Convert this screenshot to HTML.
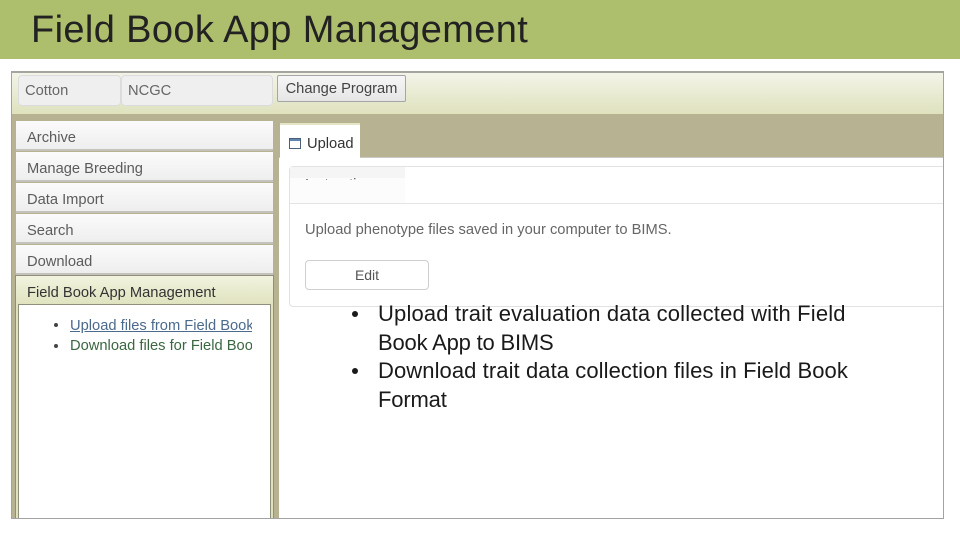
<!DOCTYPE html>
<html><head><meta charset="utf-8">
<style>
html,body{margin:0;padding:0;width:960px;height:540px;overflow:hidden;background:#fff}
body{position:relative;font-family:"Liberation Sans",Arial,sans-serif}
.a{position:absolute;box-sizing:border-box;white-space:nowrap}
.nav{left:16px;width:257px;height:30px;background:linear-gradient(#fbfbfb,#eeeeee);border-bottom:2px solid #c3c3bb;color:#5c5c5c;font-size:14.7px;line-height:34px;padding-left:11px}
.body{font-size:22px;color:#1a1a1a;letter-spacing:.16px;line-height:28px}
</style></head><body>
<div class="a" style="left:0;top:0;width:960px;height:59px;background:#adbf6c"></div>
<div class="a" style="left:31px;top:6px;font-size:38px;line-height:48px;color:#222;letter-spacing:.37px">Field Book App Management</div>

<div class="a" style="left:11px;top:71px;width:933px;height:448px;background:#fff;border:1px solid #a3a3a3;border-top:2px solid #a5a5a0"></div>
<div class="a" style="left:12px;top:73px;width:931px;height:41px;background:linear-gradient(#f3f4e8,#dfe2bd)"></div>
<div class="a" style="left:279px;top:114px;width:664px;height:43px;background:#b6b292"></div>
<div class="a" style="left:279px;top:157px;width:664px;height:1px;background:#c8c8c4"></div>
<div class="a" style="left:12px;top:114px;width:267px;height:404px;background:#b6b292"></div>

<div class="a" style="left:18px;top:75px;width:103px;height:31px;background:#efefef;border:1px solid #dcdcdc;border-radius:4px;color:#666;font-size:14.7px;line-height:30px;padding-left:6px">Cotton</div>
<div class="a" style="left:121px;top:75px;width:152px;height:31px;background:#efefef;border:1px solid #dcdcdc;border-radius:4px;color:#666;font-size:14.7px;line-height:30px;padding-left:6px">NCGC</div>
<div class="a" style="left:277px;top:75px;width:129px;height:27px;background:linear-gradient(#f6f6f6,#e6e6e6);border:1px solid #a5a5a5;border-radius:2px;color:#444;font-size:14.7px;line-height:27px;text-align:center">Change Program</div>

<div class="a nav" style="top:121px">Archive</div>
<div class="a nav" style="top:152px">Manage Breeding</div>
<div class="a nav" style="top:183px">Data Import</div>
<div class="a nav" style="top:214px">Search</div>
<div class="a nav" style="top:245px">Download</div>
<div class="a" style="left:15px;top:275px;width:259px;height:243px;background:linear-gradient(#f2f3df,#dfe2bd 30px);border:1px solid #8f8f7c;border-bottom:0;color:#333;font-size:14.7px;line-height:34px;padding-left:11px">Field Book App Management</div>
<div class="a" style="left:18px;top:304px;width:253px;height:214px;background:#fff;border:1px solid #8f8f7c;border-bottom:0"></div>
<div class="a" style="left:54px;top:323px;width:4px;height:4px;border-radius:50%;background:#444"></div>
<div class="a" style="left:54px;top:344px;width:4px;height:4px;border-radius:50%;background:#444"></div>
<div class="a" style="left:70px;top:317px;width:182px;height:18px;overflow:hidden;font-size:14.7px;line-height:18px;color:#4b6a8c;text-decoration:underline">Upload files from Field Book App</div>
<div class="a" style="left:70px;top:337px;width:182px;height:18px;overflow:hidden;font-size:14.7px;line-height:18px;color:#3a6640">Download files for Field Book App</div>

<div class="a" style="left:280px;top:123px;width:80px;height:35px;background:#fff;border-top:2px solid #e3e5c4"></div>
<svg class="a" style="left:289px;top:138px" width="12" height="11" viewBox="0 0 12 11"><rect x=".5" y=".5" width="11" height="10" fill="#fff" stroke="#4a6078"/><rect x="1" y="1" width="10" height="2" fill="#5f86b0"/></svg>
<div class="a" style="left:307px;top:135px;font-size:14.7px;line-height:18px;color:#333">Upload</div>

<div class="a" style="left:289px;top:166px;width:654px;height:141px;background:#fff;border:1px solid #e2e2e2;border-right:0;border-radius:4px 0 0 4px"></div>
<div class="a" style="left:290px;top:167px;width:115px;height:36px;background:#fcfcfc"></div>
<div class="a" style="left:290px;top:167px;width:115px;height:11px;background:#f5f5f5"></div>
<div class="a" style="left:305px;top:178px;width:100px;height:2px;overflow:hidden"><div class="a" style="left:0;top:-2px;font-size:14.7px;line-height:18px;color:#555">Instructions</div></div>
<div class="a" style="left:290px;top:203px;width:653px;height:1px;background:#e4e4e4"></div>
<div class="a" style="left:305px;top:221px;font-size:14.7px;line-height:18px;color:#666">Upload phenotype files saved in your computer to BIMS.</div>
<div class="a" style="left:305px;top:260px;width:124px;height:30px;background:#fff;border:1px solid #cfcfcf;border-radius:4px;font-size:14px;line-height:28px;text-align:center;color:#555">Edit</div>

<div class="a" style="left:352px;top:311px;width:6px;height:6px;border-radius:50%;background:#1a1a1a"></div>
<div class="a body" style="left:378px;top:300px">Upload trait evaluation data collected with Field</div>
<div class="a body" style="left:378px;top:329px;letter-spacing:-.19px">Book App to BIMS</div>
<div class="a" style="left:352px;top:368px;width:6px;height:6px;border-radius:50%;background:#1a1a1a"></div>
<div class="a body" style="left:378px;top:357px;letter-spacing:.08px">Download trait data collection files in Field Book</div>
<div class="a body" style="left:378px;top:386px;letter-spacing:-.16px">Format</div>
</body></html>
